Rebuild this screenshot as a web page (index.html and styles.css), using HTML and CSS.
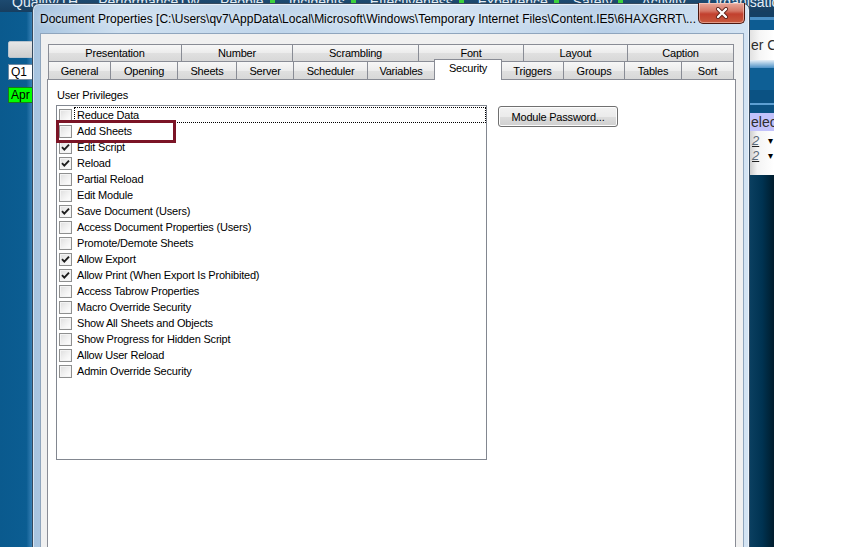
FILE: index.html
```html
<!DOCTYPE html>
<html>
<head>
<meta charset="utf-8">
<title>Document Properties</title>
<link rel="stylesheet" href="styles.css">
</head>
<body>
<div class="screen">
  <div class="app">
    <div class="topnav">
      <span class="nav n1">Quality/TH</span>
      <span class="nav n2">PerformanceTW</span>
      <span class="nav n3">People<i class="led"></i></span>
      <span class="nav n4">Incidents<i class="led"></i></span>
      <span class="nav n5">Effectiveness<i class="led"></i></span>
      <span class="nav n6">Experience<i class="led"></i></span>
      <span class="nav n7">Safety<i class="led"></i></span>
      <span class="nav n8">Activity</span>
      <span class="nav n9">Organisation<i class="led"></i></span>
      <span class="nav n10">Inte</span>
    </div>
    <div class="main">
      <div class="leftcol">
        <div class="ctl ctl-blank"></div>
        <div class="ctl ctl-q">Q1</div>
        <div class="ctl ctl-apr">Apr</div>
      </div>
      <div class="midcol"></div>
      <div class="rightcol">
        <div class="rc rc-top"></div>
        <div class="rc rc-line"></div>
        <div class="rc rc-blue"></div>
        <div class="rc rc-white"><span class="rc-text">er C</span></div>
        <div class="rc rc-grad"></div>
        <div class="rc rc-blue2"></div>
        <div class="rc rc-dark"></div>
        <div class="rc rc-line2"></div>
        <div class="rc rc-dark2"></div>
        <div class="rc rc-sel"><span class="rc-text">elec</span></div>
        <div class="rc rc-list">
          <div class="rc-row"><span class="two">2</span><span class="arr">&#9662;</span></div>
          <div class="rc-row"><span class="two">2</span><span class="arr">&#9662;</span></div>
        </div>
        <div class="rc rc-rest"></div>
      </div>
    </div>

    <div class="dialog">
      <div class="titlebar">
        <span class="title">Document Properties [C:\Users\qv7\AppData\Local\Microsoft\Windows\Temporary Internet Files\Content.IE5\6HAXGRRT\...</span>
        <div class="closebtn">
          <svg width="16" height="12" viewBox="0 0 16 12">
            <path d="M4 2 L12 10 M12 2 L4 10" stroke="#5a2018" stroke-width="4" stroke-linecap="round"/>
            <path d="M4 2 L12 10 M12 2 L4 10" stroke="#ffffff" stroke-width="2.4" stroke-linecap="round"/>
          </svg>
        </div>
      </div>
      <div class="client">
        <div class="tabs">
          <div class="tabrow row1">
            <div class="tab w-presentation">Presentation</div>
            <div class="tab w-number">Number</div>
            <div class="tab w-scrambling">Scrambling</div>
            <div class="tab w-font">Font</div>
            <div class="tab w-layout">Layout</div>
            <div class="tab w-caption">Caption</div>
          </div>
          <div class="tabrow row2">
            <div class="tab w-general">General</div>
            <div class="tab w-opening">Opening</div>
            <div class="tab w-sheets">Sheets</div>
            <div class="tab w-server">Server</div>
            <div class="tab w-scheduler">Scheduler</div>
            <div class="tab w-variables">Variables</div>
            <div class="tab w-security selected">Security</div>
            <div class="tab w-triggers">Triggers</div>
            <div class="tab w-groups">Groups</div>
            <div class="tab w-tables">Tables</div>
            <div class="tab w-sort">Sort</div>
          </div>
        </div>
        <div class="panel">
          <div class="grouplabel">User Privileges</div>
          <div class="content">
            <div class="listbox">
              <div class="item"><span class="cb"></span><span class="lbl focus">Reduce Data</span></div>
              <div class="item"><span class="cb"></span><span class="lbl">Add Sheets</span></div>
              <div class="item"><span class="cb"><svg class="chk" viewBox="0 0 11 11"><path d="M2 5.2 L4.3 7.6 L9 2.6"/></svg></span><span class="lbl">Edit Script</span></div>
              <div class="item"><span class="cb"><svg class="chk" viewBox="0 0 11 11"><path d="M2 5.2 L4.3 7.6 L9 2.6"/></svg></span><span class="lbl">Reload</span></div>
              <div class="item"><span class="cb"></span><span class="lbl">Partial Reload</span></div>
              <div class="item"><span class="cb"></span><span class="lbl">Edit Module</span></div>
              <div class="item"><span class="cb"><svg class="chk" viewBox="0 0 11 11"><path d="M2 5.2 L4.3 7.6 L9 2.6"/></svg></span><span class="lbl">Save Document (Users)</span></div>
              <div class="item"><span class="cb"></span><span class="lbl">Access Document Properties (Users)</span></div>
              <div class="item"><span class="cb"></span><span class="lbl">Promote/Demote Sheets</span></div>
              <div class="item"><span class="cb"><svg class="chk" viewBox="0 0 11 11"><path d="M2 5.2 L4.3 7.6 L9 2.6"/></svg></span><span class="lbl">Allow Export</span></div>
              <div class="item"><span class="cb"><svg class="chk" viewBox="0 0 11 11"><path d="M2 5.2 L4.3 7.6 L9 2.6"/></svg></span><span class="lbl">Allow Print (When Export Is Prohibited)</span></div>
              <div class="item"><span class="cb"></span><span class="lbl">Access Tabrow Properties</span></div>
              <div class="item"><span class="cb"></span><span class="lbl">Macro Override Security</span></div>
              <div class="item"><span class="cb"></span><span class="lbl">Show All Sheets and Objects</span></div>
              <div class="item"><span class="cb"></span><span class="lbl">Show Progress for Hidden Script</span></div>
              <div class="item"><span class="cb"></span><span class="lbl">Allow User Reload</span></div>
              <div class="item"><span class="cb"></span><span class="lbl">Admin Override Security</span></div>
            </div>
            <div class="button">Module Password...</div>
          </div>
          <div class="annot"></div>
        </div>
      </div>
    </div>
  </div>
  <div class="blank"></div>
</div>
</body>
</html>
```
FILE: styles.css
```css
* { box-sizing: border-box; }
html, body { margin: 0; padding: 0; }
body {
  width: 864px;
  height: 547px;
  overflow: hidden;
  background: #ffffff;
  font-family: "Liberation Sans", Arial, sans-serif;
}
.screen {
  display: flex;
  width: 864px;
  height: 547px;
  overflow: hidden;
}
.app {
  position: relative;
  width: 774px;
  height: 547px;
  display: flex;
  flex-direction: column;
  background: linear-gradient(#0f64a0 0%, #0b5688 40%, #033a5c 75%, #002a42 100%);
  overflow: hidden;
}
.blank { flex: 1; background: #ffffff; }

/* top navigation strip */
.topnav {
  height: 12px;
  background: linear-gradient(#1d4a70, #173e60);
  display: flex;
  align-items: flex-end;
  overflow: hidden;
  white-space: nowrap;
}
.nav {
  position: relative;
  color: #e4edf5;
  font-size: 14px;
  line-height: 14px;
  margin-bottom: 3px;
  display: flex;
  align-items: center;
}
.led {
  display: inline-block;
  width: 5px;
  height: 5px;
  background: #3cd23c;
  margin-left: 6px;
}
.n1 { margin-left: 12px; }
.n2 { margin-left: 20px; }
.n3 { margin-left: 20px; }
.n4 { margin-left: 14px; }
.n5 { margin-left: 14px; }
.n6 { margin-left: 14px; }
.n7 { margin-left: 14px; }
.n8 { margin-left: 18px; }
.n9 { margin-left: 22px; }
.n10 { margin-left: 12px; }

.main {
  flex: 1;
  display: flex;
}
.leftcol {
  width: 33px;
  padding: 29px 0 0 8px;
  display: flex;
  flex-direction: column;
  gap: 6px;
  background: linear-gradient(to right, #0a5a8e 0%, #0b5d92 80%, #3f86bb 100%);
}
.ctl {
  width: 40px;
  height: 16px;
  font-size: 12px;
  line-height: 14px;
  padding-left: 2px;
  color: #000;
}
.ctl-blank {
  height: 17px;
  border-radius: 2px;
  background: linear-gradient(#e6e6e6, #cfcfcf);
  border: 1px solid #b8c4cf;
}
.ctl-q {
  background: #ffffff;
  border: 1px solid #6f8aa2;
}
.ctl-apr {
  margin-top: 1px;
  background: #00ff00;
  border: 1px solid #1a7a1a;
}
.midcol { width: 717px; }
.rightcol {
  width: 24px;
  display: flex;
  flex-direction: column;
}
.rc { width: 24px; }
.rc-top { height: 5px; background: #153f63; }
.rc-line { height: 3px; background: #4b90c6; }
.rc-blue { height: 10px; background: #0d5c92; }
.rc-white {
  height: 30px;
  background: linear-gradient(to right, #e2e2e2, #f6f6f6 40%, #ffffff);
  display: flex;
  align-items: center;
  overflow: hidden;
}
.rc-text {
  font-size: 14px;
  color: #2d2d2d;
  white-space: nowrap;
  margin-left: 1px;
}
.rc-grad { height: 8px; background: linear-gradient(#e6f0f8, #4a90c6); }
.rc-blue2 { height: 22px; background: #0e5f95; }
.rc-dark { height: 13px; background: #0b5283; }
.rc-line2 { height: 2px; background: #5d9fd2; }
.rc-dark2 { height: 8px; background: #0b5283; }
.rc-sel {
  height: 18px;
  background: #c2c2fb;
  display: flex;
  align-items: center;
  overflow: hidden;
}
.rc-list {
  height: 44px;
  background: linear-gradient(to right, #cfcfcf, #f4f4f4 30%, #ffffff);
  padding-top: 2px;
}
.rc-row {
  height: 15px;
  display: flex;
  align-items: center;
  font-size: 13px;
  line-height: 13px;
  color: #5b6a78;
}
.two { margin-left: 2px; width: 14px; font-style: italic; text-decoration: underline; text-decoration-color: #222; }
.arr { font-size: 10px; line-height: 10px; color: #000; margin-left: 2px; }
.rc-rest {
  flex: 1;
  background: linear-gradient(to right, #0a3f60, #003352 50%, #001c2c);
}

/* dialog */
.dialog {
  position: absolute;
  left: 32px;
  top: 3px;
  width: 718px;
  height: 570px;
  border: 1px solid #34495e;
  border-radius: 7px 7px 0 0;
  background: linear-gradient(to right, #a6c3df 0%, #cfe0f0 12%, #bfd5eb 35%, #d7e6f4 55%, #b9d0e8 80%, #d4e4f3 100%);
  box-shadow: inset 0 0 0 1px rgba(255,255,255,0.55);
  display: flex;
  flex-direction: column;
}
.titlebar {
  position: relative;
  height: 29px;
  padding-left: 7px;
  display: flex;
  align-items: center;
}
.title {
  font-size: 12px;
  color: #000;
  white-space: nowrap;
  text-shadow: 0 0 6px rgba(255,255,255,0.9);
  padding-top: 1px;
}
.closebtn {
  position: absolute;
  right: 4px;
  top: -1px;
  width: 47px;
  height: 21px;
  border: 1px solid #4b1810;
  border-top: none;
  border-radius: 0 0 5px 5px;
  background: linear-gradient(#e7a99c 0%, #d47564 40%, #c2402e 55%, #c85a3e 100%);
  box-shadow: inset 0 0 0 1px rgba(255,220,210,0.5);
  display: flex;
  align-items: center;
  justify-content: center;
}
.client {
  flex: 1;
  margin: 0 5px 0 7px;
  background: #f0f0f0;
  border: 1px solid #8fa5bd;
  border-bottom: none;
  padding: 10px 0 0 6px;
  display: flex;
  flex-direction: column;
  font-size: 11px;
  letter-spacing: -0.2px;
}

/* tabs */
.tabs { padding-left: 1px; }
.tabrow { display: flex; align-items: flex-end; }
.row1 { height: 17px; }
.row2 { height: 18px; }
.tab {
  height: 100%;
  border: 1px solid #898c95;
  border-bottom: none;
  margin-right: -1px;
  background: linear-gradient(#f7f7f7 0%, #ececec 50%, #e0e0e0 51%, #d8d8d8 100%);
  display: flex;
  align-items: center;
  justify-content: center;
  font-size: 11px;
  line-height: 13px;
  color: #000;
  padding-top: 1px;
}
.row1 .tab { height: 17px; }
.row2 .tab { height: 18px; }
.tab.selected {
  position: relative;
  z-index: 2;
  height: 21px;
  margin-bottom: -1px;
  background: #ffffff;
  align-self: flex-end;
  padding-top: 0;
  padding-bottom: 3px;
}
.w-presentation { width: 134px; }
.w-number { width: 112px; }
.w-scrambling { width: 127px; }
.w-font { width: 106px; }
.w-layout { width: 105px; }
.w-caption { width: 107px; }
.w-general { width: 63px; }
.w-opening { width: 68px; }
.w-sheets { width: 60px; }
.w-server { width: 58px; }
.w-scheduler { width: 75px; }
.w-variables { width: 68px; }
.w-security { width: 68px; }
.w-triggers { width: 63px; }
.w-groups { width: 62px; }
.w-tables { width: 58px; }
.w-sort { width: 53px; }

/* panel */
.panel {
  position: relative;
  flex: 1;
  width: 689px;
  background: #ffffff;
  border: 1px solid #898c95;
  padding: 9px 0 0 8px;
}
.grouplabel {
  line-height: 13px;
  margin-left: 1px;
  color: #000;
}
.content {
  display: flex;
  align-items: flex-start;
  gap: 11px;
  margin-top: 3px;
}
.listbox {
  width: 431px;
  height: 355px;
  border: 1px solid #828790;
  padding: 1px 0 0 2px;
  background: #fff;
}
.item {
  height: 16px;
  display: flex;
  align-items: center;
}
.cb {
  width: 13px;
  height: 13px;
  flex: none;
  border: 1px solid #8e8f8f;
  background: linear-gradient(135deg, #dedede 0%, #f4f4f4 60%, #ffffff 100%);
  box-shadow: inset 0 0 0 1px #f4f4f4;
  display: flex;
  align-items: center;
  justify-content: center;
}
.chk {
  width: 11px;
  height: 11px;
  fill: none;
  stroke: #1e1e1e;
  stroke-width: 1.9;
}
.lbl {
  margin-left: 2px;
  padding-left: 3px;
  flex: 1;
  height: 16px;
  line-height: 16px;
  color: #000;
  white-space: nowrap;
}
.lbl.focus {
  border: 1px dotted #000;
  padding-left: 2px;
  line-height: 14px;
  height: 16px;
}
.button {
  width: 120px;
  height: 21px;
  margin-top: 1px;
  border: 1px solid #707070;
  border-radius: 3px;
  background: linear-gradient(#f2f2f2 0%, #ebebeb 50%, #dddddd 51%, #cfcfcf 100%);
  box-shadow: inset 0 0 0 1px #fcfcfc;
  display: flex;
  align-items: center;
  justify-content: center;
  color: #000;
  font-size: 11px;
}
.annot {
  position: absolute;
  left: 8px;
  top: 40px;
  width: 120px;
  height: 23px;
  border: 3px solid #7b1426;
}
```
